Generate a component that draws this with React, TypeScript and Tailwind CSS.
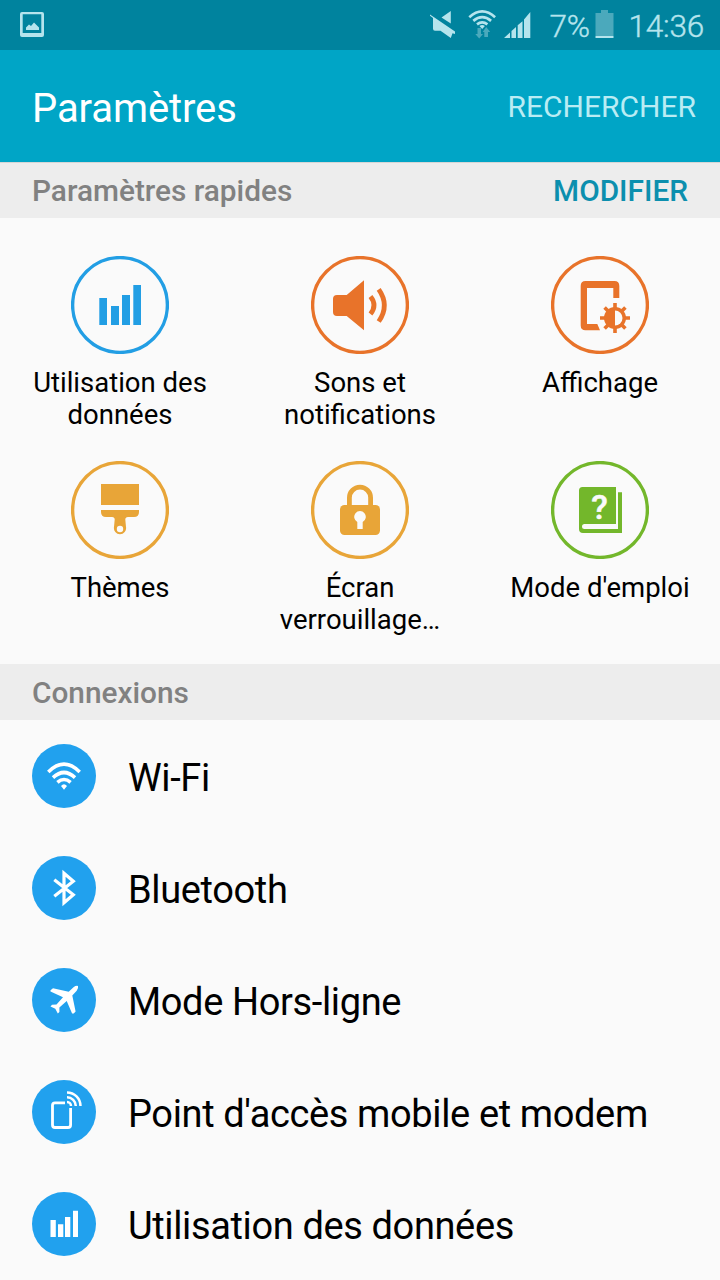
import type { ReactNode } from 'react';

interface QuickSetting {
    label: string[];
    color: string;
    icon: ReactNode;
}

interface Connection {
    label: string;
    icon: ReactNode;
}

const quickSettings: QuickSetting[] = [
    {
        label: ['Utilisation des', 'données'],
        color: 'text-[#229ee4]',
        icon: <path fill="currentColor" d="M28.3 42h7.7v27h-7.7zM40 50h8v19h-8zM51 39h8v30h-8zM62.3 29h7.7v40h-7.7z" />,
    },
    {
        label: ['Sons et', 'notifications'],
        color: 'text-[#e8732a]',
        icon: (
            <>
                <path fill="currentColor" d="M26 39H35.7L53 24.3V74.3L35.7 60H26Q22 60 22 56V43Q22 39 26 39Z" />
                <path fill="none" stroke="currentColor" strokeWidth="4.8" d="M59.5 40.5Q66.5 49.3 59.5 58M67.7 33.3Q79 49.3 67.7 65.5" />
            </>
        ),
    },
    {
        label: ['Affichage'],
        color: 'text-[#e8732a]',
        icon: (
            <>
                <path fill="currentColor" d="M34.5 25H63.5Q68.3 25 68.3 30V42H62.3V32H36V68H46.3L49 74.3H34.5Q29.7 74.3 29.7 69.5V30Q29.7 25 34.5 25Z" />
                <path stroke="currentColor" strokeWidth="3.6" d="M64 47V77M49 62H79M53.6 51.6L74.4 72.4M74.4 51.6L53.6 72.4" />
                <circle cx="64" cy="62" r="11" fill="currentColor" />
                <path fill="#fafafa" d="M64 54.5A7.5 7.5 0 0 1 64 69.5Z" />
            </>
        ),
    },
    {
        label: ['Thèmes'],
        color: 'text-[#e8a538]',
        icon: (
            <>
                <path fill="currentColor" d="M30 23H68V44H30ZM30 49H68V51Q68 56 63 56H57Q54.3 56 54.3 58.5L55 66A6.1 6.1 0 1 1 43 66L43.7 58.5Q43.7 56 41 56H35Q30 56 30 51Z" />
                <circle cx="49" cy="68" r="3.2" fill="#fafafa" />
            </>
        ),
    },
    {
        label: ['Écran', 'verrouillage…'],
        color: 'text-[#e8a538]',
        icon: (
            <>
                <path fill="none" stroke="currentColor" strokeWidth="4.8" d="M38.4 45V36.7A10.6 10.6 0 0 1 59.6 36.7V45" />
                <rect x="29" y="44" width="40" height="30" rx="4.5" fill="currentColor" />
                <path fill="#fafafa" d="M46.3 68V61A5.8 5.8 0 1 1 51.7 61V68Z" />
            </>
        ),
    },
    {
        label: ["Mode d'emploi"],
        color: 'text-[#73b72b]',
        icon: (
            <>
                <path fill="currentColor" d="M31.5 26H65V63H33.5A2.5 2.5 0 0 0 33.5 68H67V31.3H71V72H32Q28 72 28 68V29.5Q28 26 31.5 26Z" />
                <text x="48.5" y="57.5" textAnchor="middle" fontSize="34" fontWeight="500" stroke="#fafafa" strokeWidth="0.5" fill="#fafafa">?</text>
            </>
        ),
    },
];

const connections: Connection[] = [
    {
        label: 'Wi-Fi',
        icon: (
            <>
                <path fill="none" stroke="currentColor" strokeWidth="3.6" d="M16.3 28Q32 12.4 47.7 28M21 33.6Q32 23.4 43 33.6M25.4 38.3Q32 32.7 38.6 38.3" />
                <path fill="currentColor" d="M29 42Q32 38.3 35 42L32 45.7Z" />
            </>
        ),
    },
    {
        label: 'Bluetooth',
        icon: <path fill="none" stroke="currentColor" strokeWidth="3.2" d="M22.3 23.8L41.3 38.8L32 46.8V17.2L41.3 25.2L22.3 40.2" />,
    },
    {
        label: 'Mode Hors-ligne',
        icon: (
            <path
                fill="currentColor"
                d="M46 18Q44 17.4 41.5 19.3L36.7 23.7L21 20.3L18.5 22.2V23.6L31 29.2L24.5 36.5L20 36.8L18.5 38.4L23.3 40.8L25.8 45.6L27.4 44V39.5L34.7 33L40.1 45.6H41.7L43.6 43.4L40.3 27.5L44.7 22.7Q46.7 20 46 18Z"
            />
        ),
    },
    {
        label: "Point d'accès mobile et modem",
        icon: (
            <>
                <path fill="none" stroke="currentColor" strokeWidth="2.8" d="M33 22.8H23Q20.5 22.8 20.5 25.3V45Q20.5 47.5 23 47.5H36Q38.6 47.5 38.6 45V28" />
                <path fill="none" stroke="currentColor" strokeWidth="2.5" d="M35 12.5A13.5 13.5 0 0 1 48.5 26M35 17.2A8.8 8.8 0 0 1 43.8 26M35 22A4 4 0 0 1 39 26" />
            </>
        ),
    },
    {
        label: 'Utilisation des données',
        icon: <path fill="currentColor" d="M18.5 28h5.3v17h-5.3zM26 32.3h5.3V45H26zM33 25h5.3v20H33zM41 18.8h5V45h-5z" />,
    },
];

function StatusBar() {
    return (
        <div className="flex h-[50px] items-center justify-between bg-[#00839e] text-[#b5e4ed]">
            <svg width="24" height="26" viewBox="20 12 24 26" className="ml-5">
                <path fill="currentColor" fillRule="evenodd" d="M22 12H42Q44 12 44 14V35Q44 37 42 37H22Q20 37 20 35V14Q20 12 22 12ZM22.7 14.3V33H41.3V14.3Z" />
                <path fill="currentColor" d="M26 30V27.5L29 24.5L31 26L34 22.5L39 27.5V30Z" />
            </svg>
            <div className="mr-4 flex h-full items-center">
                <svg width="121" height="50" viewBox="428 0 121 50">
                    <path fill="currentColor" d="M450.8 11V23.5L441.5 17.5ZM433 18L430 15.7V14.5L455 31.5V34L452.5 33.3L450.8 38L440.5 30.8H435Q433 30.8 433 28.8Z" />
                    <path fill="none" stroke="currentColor" strokeWidth="2.7" d="M469.3 17.2Q482.2 5.6 495.1 17.2M473.3 20.9Q482.2 13.4 491.1 20.9M477 24.3Q482.2 20.4 487.4 24.3" />
                    <path fill="currentColor" d="M479.5 26Q482.2 24 484.9 26L482.2 29Z" />
                    <path fill="#4ba9bc" d="M477.5 28H481V34H483L479.2 38.5L475.3 34H477.5ZM484.3 37H488V32H490.2L486.2 27L482.7 32H484.3Z" />
                    <path fill="currentColor" d="M504 38L510 32.5V38ZM511.5 31L516 27V38H511.5ZM517.7 25.3L522.5 21.3V38H517.7ZM524 19.5L530.3 12V38H524Z" />
                </svg>
                <span className="w-10 pt-1 text-[31.5px] leading-[50px] font-light tracking-[-0.3px] [-webkit-text-stroke:0.4px]">7%</span>
                <svg width="20" height="50" viewBox="595 0 20 50" className="ml-1.5">
                    <path fill="#4ba9bc" d="M601 10H608V13H613.5V36H595.5V13H601Z" />
                    <path fill="currentColor" d="M595.5 36H613.5V38H595.5Z" />
                </svg>
                <span className="ml-[13px] pt-1 text-[31.5px] leading-[50px] font-light tracking-[-0.2px] [-webkit-text-stroke:0.4px]">14:36</span>
            </div>
        </div>
    );
}

export default function App() {
    return (
        <div className="h-[1280px] w-[720px] overflow-hidden bg-[#fafafa] font-['Roboto',sans-serif] whitespace-nowrap text-black">
            <StatusBar />

            <header className="flex h-28 items-center justify-between bg-[#00a5c6] pr-6 pl-8 text-white">
                <h1 className="pt-1.5 text-[40px] leading-[48px] tracking-[-0.1px]">Paramètres</h1>
                <button className="pt-0.5 text-[30px] leading-9 text-[#b9ecf4]">RECHERCHER</button>
            </header>

            <div className="flex h-14 items-center justify-between border-t border-[#d6d6d6] bg-[#ededed] px-8 text-[29.8px] leading-9 font-medium">
                <h2 className="text-[#818181]">Paramètres rapides</h2>
                <button className="text-[#0c8fae]">MODIFIER</button>
            </div>

            <div className="grid h-[446px] grid-cols-3 grid-rows-[205px_205px] pt-[38px]">
                {quickSettings.map((item) => (
                    <div key={item.label[0]} className="flex flex-col items-center">
                        <svg width="98" height="98" viewBox="0 0 98 98" className={item.color}>
                            <circle cx="49" cy="49" r="47.4" fill="none" stroke="currentColor" strokeWidth="3.4" />
                            {item.icon}
                        </svg>
                        <div className="mt-[13px] text-center text-[27.5px] leading-8">
                            {item.label.map((line) => (
                                <div key={line}>{line}</div>
                            ))}
                        </div>
                    </div>
                ))}
            </div>

            <h2 className="flex h-14 items-center bg-[#ededed] px-8 pt-0.5 text-[29.8px] leading-9 font-medium text-[#818181]">Connexions</h2>

            <div>
                {connections.map((item) => (
                    <div key={item.label} className="flex h-28 items-center gap-8 px-8">
                        <svg width="64" height="64" viewBox="0 0 64 64" className="shrink-0 text-white">
                            <circle cx="32" cy="32" r="32" fill="#21a1ee" />
                            {item.icon}
                        </svg>
                        <span className="pt-1 text-[38px] leading-[44px] tracking-[-0.37px]">{item.label}</span>
                    </div>
                ))}
            </div>
        </div>
    );
}
